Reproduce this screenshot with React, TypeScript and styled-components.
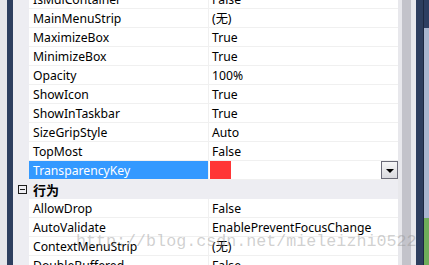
import React from 'react';
import styled, { createGlobalStyle } from 'styled-components';

interface Prop {
  name: string;
  value?: string;
  color?: string;
  selected?: boolean;
}

const appearance: Prop[] = [
  { name: 'IsMdiContainer', value: 'False' },
  { name: 'MainMenuStrip', value: '(无)' },
  { name: 'MaximizeBox', value: 'True' },
  { name: 'MinimizeBox', value: 'True' },
  { name: 'Opacity', value: '100%' },
  { name: 'ShowIcon', value: 'True' },
  { name: 'ShowInTaskbar', value: 'True' },
  { name: 'SizeGripStyle', value: 'Auto' },
  { name: 'TopMost', value: 'False' },
  { name: 'TransparencyKey', color: '#ff3636', selected: true },
];

const behavior: Prop[] = [
  { name: 'AllowDrop', value: 'False' },
  { name: 'AutoValidate', value: 'EnablePreventFocusChange' },
  { name: 'ContextMenuStrip', value: '(无)' },
  { name: 'DoubleBuffered', value: 'False' },
];

const GlobalStyle = createGlobalStyle`
  html, body {
    margin: 0;
    padding: 0;
    background: #ffffff;
  }
  body {
    font-family: "Noto Sans", "Noto Sans CJK SC", sans-serif;
  }
`;

const Screen = styled.div`
  position: relative;
  display: flex;
  width: 429px;
  height: 265px;
  overflow: hidden;
`;

const Strip = styled.div<{ $w: number; $bg: string }>`
  flex: 0 0 ${({ $w }) => $w}px;
  background: ${({ $bg }) => $bg};
`;

const Grid = styled.div`
  flex: 0 0 385px;
  display: flex;
  flex-direction: column;
  margin-top: -10px;
  background: #ededf2;
  font-size: 12.2px;
  color: #000;
`;

const Row = styled.div`
  display: flex;
  height: 19px;
  flex: 0 0 19px;
`;

const Gutter = styled.div`
  flex: 0 0 16px;
  display: flex;
  align-items: center;
  justify-content: center;
`;

const Cell = styled.div`
  box-sizing: border-box;
  height: 19px;
  border-bottom: 1px solid #f0f0f0;
  display: flex;
  align-items: center;
  line-height: 18px;
  padding-top: 1px;
  white-space: nowrap;
  overflow: hidden;
`;

const NameCell = styled(Cell)<{ $selected?: boolean }>`
  flex: 0 0 180px;
  padding-left: 4px;
  border-right: 1px solid #f0f0f0;
  background: ${({ $selected }) => ($selected ? '#3399ff' : '#ffffff')};
  color: ${({ $selected }) => ($selected ? '#ffffff' : '#000000')};
`;

const ValueCell = styled(Cell)`
  flex: 1;
  padding-left: 3px;
  background: #ffffff;
`;

const Swatch = styled.div<{ $c: string }>`
  width: 21px;
  height: 19px;
  margin-left: -2px;
  margin-top: -1px;
  align-self: flex-start;
  background: ${({ $c }) => $c};
`;

const DropButton = styled.div`
  margin-left: auto;
  margin-top: -1px;
  box-sizing: border-box;
  width: 17px;
  height: 18px;
  align-self: flex-start;
  border: 1px solid #6b6b78;
  background: linear-gradient(#f6f6f6, #dadade);
  display: flex;
  align-items: center;
  justify-content: center;
  padding-top: 2px;
`;

const Triangle = styled.div`
  width: 0;
  height: 0;
  border-left: 4px solid transparent;
  border-right: 4px solid transparent;
  border-top: 4px solid #000;
`;

const CategoryRow = styled(Row)`
  align-items: center;
  font-weight: bold;
`;

const Expander = styled.div`
  box-sizing: border-box;
  width: 9px;
  height: 9px;
  border: 1px solid #1e1e1e;
  display: flex;
  align-items: center;
  justify-content: center;
  margin-left: 3px;
  &::after {
    content: '';
    width: 5px;
    height: 1px;
    background: #1e1e1e;
  }
`;

const CategoryLabel = styled.div`
  padding-left: 4px;
  font-size: 13px;
  font-family: "Noto Sans CJK SC", sans-serif;
`;

const Scroll = styled.div`
  flex: 0 0 18px;
  display: flex;
`;

const Desktop = styled.div`
  flex: 1;
  display: flex;
  flex-direction: column;
  border-left: 1px solid #1c2740;
`;

const Tile = styled.div<{ $h: number; $bg: string }>`
  flex: 0 0 ${({ $h }) => $h}px;
  background: ${({ $bg }) => $bg};
`;

const Watermark = styled.div`
  position: absolute;
  left: 76px;
  top: 232px;
  font-family: "Liberation Mono", monospace;
  font-size: 16.7px;
  color: rgba(150, 150, 150, 0.45);
  white-space: nowrap;
  pointer-events: none;
`;

const PropRow: React.FC<{ p: Prop }> = ({ p }) => (
  <Row>
    <Gutter />
    <NameCell $selected={p.selected}>{p.name}</NameCell>
    <ValueCell>
      {p.color ? (
        <>
          <Swatch $c={p.color} />
          <DropButton>
            <Triangle />
          </DropButton>
        </>
      ) : (
        p.value
      )}
    </ValueCell>
  </Row>
);

const App: React.FC = () => {
  return (
    <>
      <GlobalStyle />
      <Screen>
        <Strip $w={7} $bg="#e6e6ea" />
        <Strip $w={6} $bg="#2e3f5f" />
        <Grid>
          {appearance.map((p) => (
            <PropRow key={p.name} p={p} />
          ))}
          <CategoryRow>
            <Gutter>
              <Expander />
            </Gutter>
            <CategoryLabel>行为</CategoryLabel>
          </CategoryRow>
          {behavior.map((p) => (
            <PropRow key={p.name} p={p} />
          ))}
        </Grid>
        <Scroll>
          <Strip $w={4} $bg="#e8e8ec" />
          <Strip $w={9} $bg="#c3c3ca" />
          <Strip $w={5} $bg="#e8e8ec" />
        </Scroll>
        <Strip $w={7} $bg="#2d3e5e" />
        <Desktop>
          <Tile $h={28} $bg="#2e3f62" />
          <Tile $h={190} $bg="#a9b6cf" />
          <Tile $h={47} $bg="#6fae5a" />
        </Desktop>
        <Watermark>http://blog.csdn.net/mieleizhi0522</Watermark>
      </Screen>
    </>
  );
};

export default App;
